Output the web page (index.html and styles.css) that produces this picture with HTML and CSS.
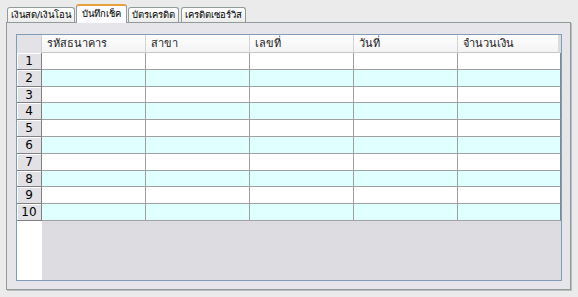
FILE: index.html
```html
<!DOCTYPE html>
<html lang="th">
<head>
  <meta charset="UTF-8" />
  <title>บันทึกเช็ค</title>
  <link rel="stylesheet" href="styles.css">
</head>
<body>
  <div class="window">

    <!-- Tabs -->
    <div class="tabs">
      <div class="tab">เงินสด/เงินโอน</div>
      <div class="tab active">บันทึกเช็ค</div>
      <div class="tab">บัตรเครดิต</div>
      <div class="tab">เครดิตเซอร์วิส</div>
    </div>

    <!-- Panel -->
    <div class="panel">
      <div class="grid" id="grid">
        <div class="corner"></div>
        <div class="colhead">รหัสธนาคาร</div>
        <div class="colhead">สาขา</div>
        <div class="colhead">เลขที่</div>
        <div class="colhead">วันที่</div>
        <div class="colhead last">จำนวนเงิน</div>
      </div>
    </div>

  </div>

  <script>
    const grid = document.getElementById('grid');

    // --- Righe della griglia ---
    for (let i = 1; i <= 10; i++) {
      const head = document.createElement('div');
      head.className = 'rowhead';
      head.textContent = i;
      grid.appendChild(head);

      for (let c = 0; c < 5; c++) {
        const cell = document.createElement('div');
        cell.className = 'cell' + (i % 2 === 0 ? ' alt' : '') + (c === 4 ? ' last' : '');
        grid.appendChild(cell);
      }
    }

    // area vuota sotto
    const blankHead = document.createElement('div');
    blankHead.className = 'blank-head';
    grid.appendChild(blankHead);

    const blank = document.createElement('div');
    blank.className = 'blank';
    grid.appendChild(blank);
  </script>
</body>
</html>
```

FILE: styles.css
```css
* {
  box-sizing: border-box;
}

body {
  margin: 0;
  background-color: #ebebeb;
  font-family: Tahoma, 'DejaVu Sans', 'Noto Sans', sans-serif;
  font-size: 11px;
  color: #000;
}

.window {
  padding: 4px 7px 7px 6px;
}

.tabs {
  display: flex;
  align-items: flex-end;
  height: 18px;
  padding-left: 1px;
  position: relative;
  z-index: 1;
}

.tab {
  height: 15px;
  line-height: 14px;
  padding: 0 3px;
  margin-right: 2px;
  border: 1px solid #919b9c;
  border-bottom: none;
  border-radius: 3px 3px 0 0;
  background: linear-gradient(#ffffff, #ececeb);
  font-size: 9.5px;
  white-space: nowrap;
}

.tab.active {
  height: 19px;
  line-height: 15px;
  padding: 0 5px;
  margin: 0 1px -1px -1px;
  border-top: 2px solid #e7a13b;
  background: #fcfcfe;
}

.panel {
  height: 268px;
  padding: 11px 8px 8px 9px;
  border: 1px solid #919b9c;
  background-color: #e6e6ea;
  box-shadow: 1px 1px 0 #bdbdbd;
}

.grid {
  display: grid;
  grid-template-columns: 25px repeat(4, 104px) 1fr;
  grid-template-rows: 18px repeat(10, 16.8px) 1fr;
  height: 247px;
  border: 1px solid #7f9db9;
  background-color: #dddde1;
}

.corner {
  background-color: #e3e3e7;
  border-right: 1px solid #d0d0d0;
}

.colhead {
  padding-left: 5px;
  line-height: 17px;
  background: linear-gradient(#ffffff, #f3f3f5);
  border-right: 1px solid #d4d4d4;
  border-bottom: 1px solid #c8c8c8;
  color: #222;
}

.colhead.last {
  border-right: 3px solid #dcdcdc;
}

.rowhead {
  background-color: #e2e1e5;
  border-right: 1px solid #808080;
  border-bottom: 1px solid #808080;
  box-shadow: inset 1px 1px 0 #ffffff;
  text-align: center;
  font-size: 12px;
  line-height: 16px;
}

.cell {
  background-color: #ffffff;
  border-right: 1px solid #a0a0a0;
  border-bottom: 1px solid #a0a0a0;
}

.cell.alt {
  background-color: #e0ffff;
}

.cell.last {
  border-right: 1px solid #808890;
}

.blank-head {
  background-color: #ffffff;
}

.blank {
  grid-column: 2 / 7;
  background-color: #dddde1;
}
```
